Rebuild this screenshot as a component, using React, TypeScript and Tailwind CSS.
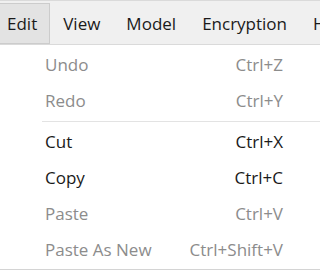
const menus = ["Edit", "View", "Model", "Encryption", "Help"];

type Item = { label: string; shortcut: string; enabled: boolean } | "sep";

const items: Item[] = [
  { label: "Undo", shortcut: "Ctrl+Z", enabled: false },
  { label: "Redo", shortcut: "Ctrl+Y", enabled: false },
  "sep",
  { label: "Cut", shortcut: "Ctrl+X", enabled: true },
  { label: "Copy", shortcut: "Ctrl+C", enabled: true },
  { label: "Paste", shortcut: "Ctrl+V", enabled: false },
  { label: "Paste As New", shortcut: "Ctrl+Shift+V", enabled: false },
];

export default function App() {
  return (
    <div
      className="w-[320px] h-[271px] overflow-hidden bg-white text-[17px]"
      style={{ fontFamily: '"Open Sans", "Noto Sans", sans-serif' }}
    >
      <div className="flex h-[45px] border-t border-b border-[#dadada] bg-[#f0f0f0] whitespace-nowrap">
        {menus.map((m, i) => (
          <div
            key={m}
            className={
              i === 0
                ? "flex items-center -ml-[6px] mt-[2px] pl-3 pr-3 border border-[#cccccc] bg-[#e3e3e3] text-[#1a1a1a]"
                : "flex items-center px-3 mt-[2px] border border-transparent text-[#1a1a1a]"
            }
          >
            {m}
          </div>
        ))}
      </div>
      <div className="pt-[2px] border-b border-[#d4d4d4] h-[225px]">
        {items.map((it, i) =>
          it === "sep" ? (
            <div key={i} className="h-[5px] pl-[42px] flex items-center">
              <div className="h-px w-full bg-[#e3e3e3]" />
            </div>
          ) : (
            <div
              key={it.label}
              className={`flex h-[36px] items-center pl-[45px] pr-[37px] ${
                it.enabled ? "text-[#1a1a1a]" : "text-[#8c8c8c]"
              }`}
            >
              <span className="grow">{it.label}</span>
              <span>{it.shortcut}</span>
            </div>
          )
        )}
      </div>
    </div>
  );
}
